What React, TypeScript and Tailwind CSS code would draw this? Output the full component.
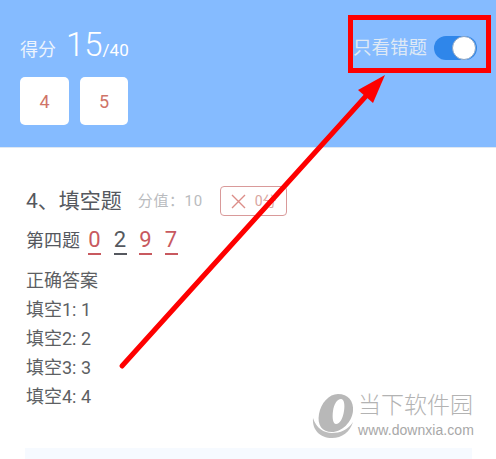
import React from 'react';

const Digit = ({ value, red }: { value: string; red?: boolean }) => (
  <span
    className={`w-[13px] h-[27px] flex justify-center items-start border-b-2 text-[22px] leading-[24px] ${
      red ? 'text-[#c8595f] border-[#c8595f]' : 'text-[#55585e] border-[#55585e]'
    }`}
  >
    {value}
  </span>
);

const Tab = ({ value, width }: { value: string; width: string }) => (
  <div
    className={`${width} h-[48px] bg-white rounded-[5px] flex items-center justify-center text-[#cf7468] text-[18px]`}
  >
    {value}
  </div>
);

const App: React.FC = () => {
  return (
    <div className="relative w-[496px] h-[459px] overflow-hidden bg-white font-['Roboto','Noto_Sans_CJK_SC',sans-serif]">
      <header className="h-[148px] bg-[#85bbff] pl-[20px] pr-[19px] pt-[26px] flex justify-between border-b border-[#dfe8f2]">
        <div>
          <div className="flex items-baseline h-[38px] text-white whitespace-nowrap">
            <span className="text-[18px] text-[#edf4fd] mr-[10px]">得分</span>
            <span className="text-[33px] leading-[38px] font-light">15</span>
            <span className="text-[17px]">/40</span>
          </div>
          <div className="flex gap-[11px] mt-[13px]">
            <Tab value="4" width="w-[49px]" />
            <Tab value="5" width="w-[48px]" />
          </div>
        </div>
        <div className="flex items-start pt-[10px]">
          <span className="text-[18.5px] leading-[24px] text-[#dfe9f5] mr-[7px] whitespace-nowrap">只看错题</span>
          <div className="relative w-[43px] h-[24px] rounded-full bg-[#2f86ea]">
            <div className="absolute right-[1px] top-0 w-[24px] h-[24px] rounded-full bg-white border border-[#8aa4c4]" />
          </div>
        </div>
      </header>

      <main className="pl-[26px] pt-[38px]">
        <div className="flex items-center h-[30px] whitespace-nowrap">
          <span className="text-[#55585e] text-[21px] leading-[30px]">4、填空题</span>
          <span className="ml-[16px] text-[15px] tracking-[0.6px] text-[#b9bbbe]">分值：10</span>
          <div className="ml-[17px] w-[67px] h-[30px] rounded-[4px] border border-[#d99a9a] flex items-center pl-[9px] gap-[8px] text-[#d9a5a0] text-[14px]">
            <svg width="17" height="17" viewBox="0 0 17 17" fill="none" stroke="#dc8d88" strokeWidth="1.4">
              <path d="M2 2 L15 15 M15 2 L2 15" />
            </svg>
            <span>0分</span>
          </div>
        </div>
        <div className="flex items-start h-[31px] mt-[12px] text-[#55585e]">
          <span className="text-[18px] leading-[26px] mr-[8px] whitespace-nowrap">第四题</span>
          <div className="flex gap-[12.5px]">
            <Digit value="0" red />
            <Digit value="2" />
            <Digit value="9" red />
            <Digit value="7" red />
          </div>
        </div>
        <div className="mt-[7px] text-[18px] leading-[29px] text-[#5d5f63]">
          <p>正确答案</p>
          <p>填空1: 1</p>
          <p>填空2: 2</p>
          <p>填空3: 3</p>
          <p>填空4: 4</p>
        </div>
        <div className="mt-[37px] -ml-px h-[14px] w-[447px] bg-[#f6faff]" />
      </main>

      {/* annotation */}
      <div className="absolute left-[348px] top-[15px] w-[143px] h-[58px] border-[5px] border-[#fe0000]" />
      <svg className="absolute left-0 top-0" width="496" height="459" viewBox="0 0 496 459" fill="none">
        <path d="M122 366 L366 96" stroke="#fe0000" strokeWidth="5" strokeLinecap="round" />
        <path d="M385 75 L358 90 L373 103 Z" fill="#fe0000" />
      </svg>

      {/* watermark */}
      <div className="absolute left-[312px] top-[394px] flex items-start whitespace-nowrap">
        <svg width="42" height="45" viewBox="0 0 42 45" fill="none">
          <path
            fillRule="evenodd"
            d="M26 0 C36 0 42 7 41 17 C40 28 30 38 20 38 C10 38 5 31 7 20 C9 9 17 0 26 0 Z M29 5 C25 5 22 10 21 17 C20 24 21 30 24 30 C28 30 31 24 32 17 C33 10 32 5 29 5 Z"
            fill="#b8b8b8"
          />
          <path d="M1 24 C0 36 8 44 20 44 C30 44 38 38 41 28 C36 36 28 39 20 39 C12 39 4 34 1 24 Z" fill="#bdbdbd" />
        </svg>
        <div className="ml-[4px] -mt-[2px]">
          <div className="text-[23px] leading-[28px] font-light text-[#b3b3b3]">当下软件园</div>
          <div className="mt-[2px] text-[14px] leading-[17px] tracking-[0.05px] font-['Liberation_Sans',sans-serif] text-[#a8a8a8]">
            www.downxia.com
          </div>
        </div>
      </div>
    </div>
  );
};

export default App;
